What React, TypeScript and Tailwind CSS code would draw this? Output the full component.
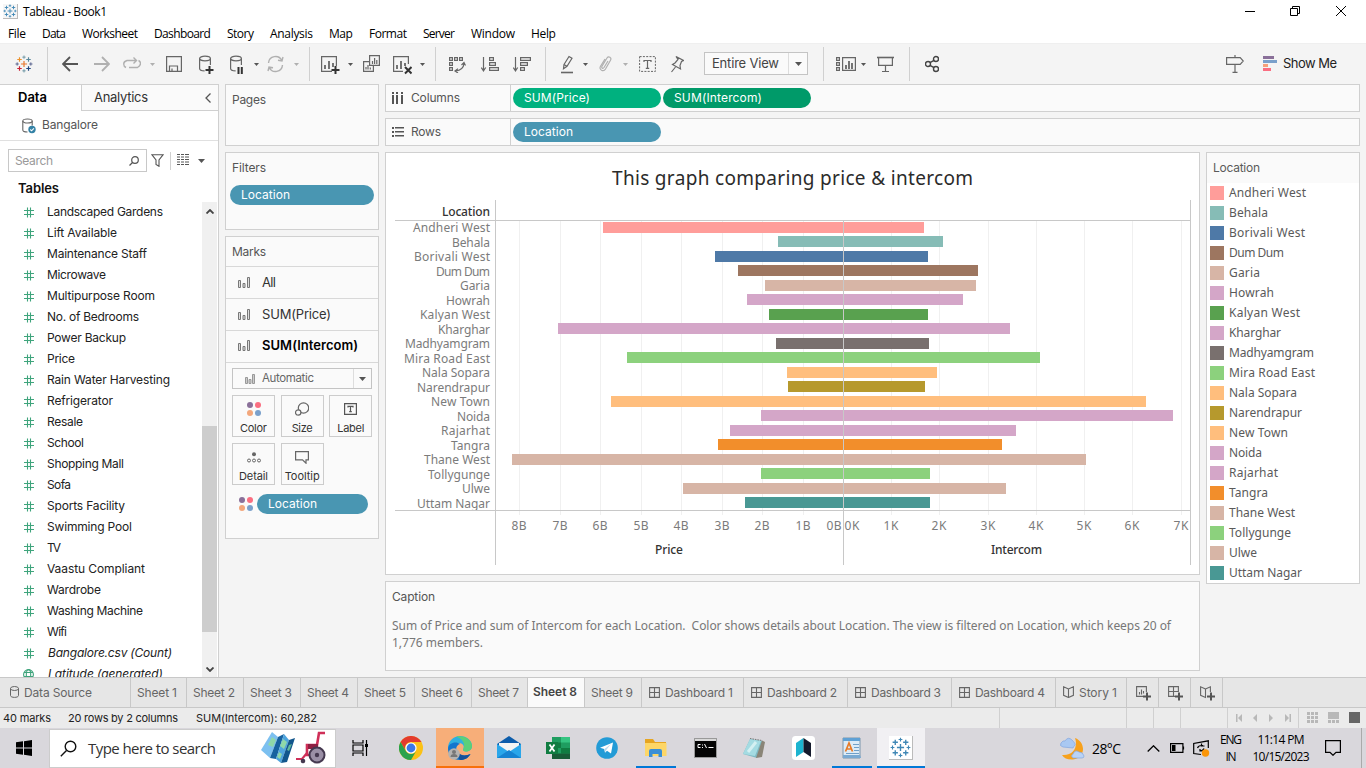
import React, { useLayoutEffect, useRef, useState } from "react";

type Kids = { children?: React.ReactNode };

/* A label that tracks its letters so that it takes up a given width. */
function T({ w, c = "", children }: { w: number; c?: string; children: string }) {
  const ref = useRef<HTMLSpanElement>(null);
  const [ls, setLs] = useState(0);
  useLayoutEffect(() => {
    const el = ref.current;
    if (!el) return;
    setLs((w - el.getBoundingClientRect().width) / Math.max(1, children.length - 1));
  }, [w, children]);
  return (
    <span ref={ref} className={"inline-block shrink-0 whitespace-nowrap " + c} style={{ letterSpacing: ls, marginRight: -ls }}>
      {children}
    </span>
  );
}

function Ic({ w, h = 18, c = "", children }: Kids & { w: number; h?: number; c?: string }) {
  return (
    <svg width={w} height={h} viewBox={`0 0 ${w} ${h}`} fill="none" stroke="#666" strokeWidth="1.2" className={"block shrink-0 " + c}>
      {children}
    </svg>
  );
}

const Sep = ({ c }: { c: string }) => <div className={"-mt-2 h-[34px] w-px shrink-0 bg-[#d0d0d0] " + c} />;
const Caret = ({ c, light }: { c: string; light?: boolean }) => (
  <Ic w={5} c={c}><path d="M0 8h5L2.5 11z" fill={light ? "#b0b0b0" : "#555"} stroke="none" /></Ic>
);
const Plus = ({ x, y }: { x: number; y: number }) => <path d={`M${x - 4} ${y}h8M${x} ${y - 4}v8`} stroke="#333" strokeWidth="2" />;

function TableauMark({ size, mono = false, c = "" }: { size: number; mono?: boolean; c?: string }) {
  const m = "#3f87b5";
  const pts: [number, number, number, string][] = [
    [10, 10, 3.4, "#e8762c"], [10, 2.4, 1.8, "#7199a6"], [10, 17.6, 1.8, "#7099a6"], [2.4, 10, 1.8, "#5b6591"], [17.6, 10, 1.8, "#5b6591"],
    [5, 5, 2.5, "#eb912c"], [15, 5, 2.5, "#59879b"], [5, 15, 2.5, "#c72035"], [15, 15, 2.5, "#1f457e"],
  ];
  return (
    <svg width={size} height={size} viewBox="0 0 20 20" className={"block shrink-0 " + c}>
      {pts.map(([x, y, r, f], i) => (
        <path key={i} d={`M${x - r} ${y}h${2 * r}M${x} ${y - r}v${2 * r}`} stroke={mono ? m : f} strokeWidth={r > 2 ? 1.3 : 1.1} />
      ))}
    </svg>
  );
}

const menus: [string, number, string][] = [
  ["File", 18, "ml-2"], ["Data", 24, "ml-4"], ["Worksheet", 56, "ml-4"], ["Dashboard", 57, "ml-4"], ["Story", 27, "ml-4"],
  ["Analysis", 43, "ml-4"], ["Map", 24, "ml-4"], ["Format", 38, "ml-4"], ["Server", 32, "ml-4"], ["Window", 44, "ml-4"], ["Help", 25, "ml-4"],
];

function TitleBar() {
  return (
    <div className="h-[43px] shrink-0 bg-white font-[family-name:'Open_Sans','Noto_Sans',sans-serif] text-[12px] text-black">
      <div className="flex h-[23px] items-center">
        <div className="ml-[3px] border-r border-b border-[#bbb] bg-[#f6f6f6]"><TableauMark size={14} mono /></div>
        <T w={84} c="ml-[5px]">Tableau - Book1</T>
        <svg width="106" height="14" viewBox="0 0 106 14" className="mr-4 ml-auto mb-[3px]" fill="none" stroke="#000" strokeWidth="1">
          <path d="M1 8.5h10" />
          <path d="M46.500 5.500h7v7h-7zM48.500 5.500v-2h7v7h-2" />
          <path d="M92 3l10 10M102 3l-10 10" />
        </svg>
      </div>
      <div className="flex h-[20px] items-center pt-[2px]">
        {menus.map(([t, w, m]) => <T key={t} w={w} c={m}>{t}</T>)}
      </div>
    </div>
  );
}

function Toolbar() {
  return (
    <div className="flex h-[41px] shrink-0 items-start border-t border-[#efefef] bg-[#f4f4f4] pt-[11px]">
      <TableauMark size={18} c="ml-[15px]" />
      <Sep c="ml-[14px]" />
      <Ic w={16} c="ml-[14px]"><path d="M16 9H1.500M8 2L1 9l7 7" stroke="#555" strokeWidth="1.8" /></Ic>
      <Ic w={16} c="ml-4"><path d="M0 9h14.500M8 2l7 7-7 7" stroke="#b0b0b0" strokeWidth="1.8" /></Ic>
      <Ic w={18} c="ml-[13px]"><path d="M3 12.500Q.7 11.500.7 9T4 5.500h9M10.500 2.500l3 3-3 3M15.500 5.500q2 .8 2 3t-3 4H6" stroke="#b0b0b0" strokeWidth="1.400" /></Ic>
      <Caret c="ml-[9px]" light />
      <Ic w={16} c="ml-[11px]"><path d="M.6 1.600h14.800v14.800H.6zM3.500 16v-5h8v5M6 16v-2.500" /></Ic>
      <Ic w={15} h={20} c="ml-[17px]">
        <ellipse cx="6" cy="3.500" rx="5.400" ry="2.300" /><path d="M.6 3.500v10c0 1.500 2 2.400 5 2.400M11.400 3.500V10" /><Plus x={10.500} y={15} />
      </Ic>
      <Ic w={13} h={20} c="ml-4">
        <ellipse cx="6" cy="3.500" rx="5.400" ry="2.300" /><path d="M.6 3.500v10c0 1.500 2 2.400 5 2.400M11.400 3.500V10" /><path d="M8.500 12v7M11.800 12v7" stroke="#333" strokeWidth="2" />
      </Ic>
      <Caret c="ml-[11px]" />
      <Ic w={17} c="ml-2"><path d="M1.500 8a7 7 0 0 1 13.300-2.500M15.500 10a7 7 0 0 1-13.300 2.500M16 2l-1 4-4-.8M1 16l1-4 4 .8" stroke="#b0b0b0" strokeWidth="1.400" /></Ic>
      <Caret c="ml-[10px]" light />
      <Sep c="ml-[10px]" />
      <Ic w={19} h={20} c="ml-[11px]"><path d="M15.400 11V1.600H.6v14.800H11" /><path d="M4 14v-4M8 14V6M12 12V8" strokeWidth="1.800" /><Plus x={14.500} y={15} /></Ic>
      <Caret c="ml-2" />
      <Ic w={17} c="ml-[10px]">
        <path d="M6.600.6h9.800v9.800H6.600zM6.500 6.600H.6v9.800h9.800v-6" /><path d="M9.500 9V6M11.600 9V3M13.800 9V5M3 14.500V12M5 14.500V10M7.300 14.500v-2" />
      </Ic>
      <Ic w={19} h={20} c="ml-[13px]"><path d="M15.400 9V1.600H.6v14.800H10" /><path d="M4 14v-4M8 14V6M12 11V8" strokeWidth="1.800" /><path d="M12 12l6.500 6.500M18.500 12L12 18.500" stroke="#333" strokeWidth="2" /></Ic>
      <Caret c="ml-2" />
      <Sep c="ml-[10px]" />
      <Ic w={17} c="ml-[13px]">
        <path d="M.6 2.600h2.800v2.800H.6zM5.600 2.600h2.800v2.800H5.600zM10.600 2.600h2.800v2.800h-2.800zM.6 7.600h2.800v2.800H.6zM.6 12.600h2.800v2.800H.6z" /><path d="M15 8.500q-.5 6.500-8.500 7.500M12.500 10L15 7.500l1.500 3M9 13.800L6 16l3 2" />
      </Ic>
      <Ic w={18} c="ml-[15px]"><path d="M2.500 2v13M.3 12.500l2.200 3.300 2.200-3.300M8.600 2.600h3.800v2.800H8.600zM8.600 7.600h5.800v2.800H8.600zM8.600 12.600h8.800v2.800H8.600z" /></Ic>
      <Ic w={18} c="ml-[14px]"><path d="M2.500 2v13M.3 12.500l2.200 3.300 2.200-3.300M7.600 2.600h9.800v2.800H7.600zM7.600 7.600h6.800v2.800H7.600zM7.600 12.600h3.800v2.800H7.600z" /></Ic>
      <Sep c="ml-[14px]" />
      <Ic w={14} h={20} c="ml-[15px]"><path d="M3 9.500L8 1.500l3 1.800-5 8-3.500 2.500zM3 9.500l3.300 2" /><path d="M0 17.500h12" strokeWidth="1.600" /></Ic>
      <Caret c="ml-2" />
      <Ic w={13} c="ml-[11px]"><path d="M9 6l-4 6.500c-1 1.500-3 .5-2-1.200L8 3c1.500-2.300 5-.4 3.500 2.200L6.500 14c-2 3.300-7 .8-5-2.800L6 4" stroke="#b0b0b0" /></Ic>
      <Caret c="ml-[11px]" light />
      <Ic w={17} c="ml-[11px]"><path d="M.6 1.600h15.800v14.800H.6z" strokeDasharray="2 1.300" strokeWidth="1" /><path d="M5 7V5.500h7V7M8.500 5.500v8M6.800 13.300h3.400" /></Ic>
      <Ic w={13} c="ml-[15px]"><path d="M5 1.500l7.500 4-2 1-1.500 4 .5 3.500-8-4.500 2.500-1.500L7 4.500zM4.500 12L.5 17" /></Ic>
      <div className="-mt-[3px] ml-5 flex h-[23px] w-[104px] items-center border border-[#c4c4c4] bg-[#fafafa] font-[family-name:Inter,sans-serif] text-[13px] text-[#444]">
        <T w={67} c="ml-[7px]">Entire View</T>
        <div className="ml-auto flex h-full w-[19px] items-center justify-center border-l border-[#ddd]">
          <svg width="7" height="4"><path d="M0 0h7L3.500 4z" fill="#555" /></svg>
        </div>
      </div>
      <Sep c="ml-[15px]" />
      <Ic w={20} c="ml-3"><path d="M.6 2.600h2.800v2.800H.6zM.6 7.600h2.800v2.800H.6zM.6 12.600h2.800v2.800H.6zM6.600 2.600h12.800v12.800H6.600z" /><path d="M10 14v-4M13 14V6M16 14V8" strokeWidth="1.800" /></Ic>
      <Caret c="ml-[5px]" />
      <Ic w={17} c="ml-[11px]"><path d="M0 2.500h17" strokeWidth="1.600" /><path d="M1.600 3v7.400h13.800V3M8.500 10.500v6M5 16.500h7" /></Ic>
      <Sep c="ml-[15px]" />
      <Ic w={14} c="ml-[15px]"><g stroke="#444" strokeWidth="1.400"><circle cx="3" cy="9" r="2.500" /><circle cx="11" cy="4" r="2.500" /><circle cx="11" cy="14" r="2.500" /><path d="M5 7.700L9 5.300M5 10.300l4 2.400" /></g></Ic>
      <Ic w={18} c="ml-auto"><path d="M.6 2.600h13.600L17.300 6l-3.100 3.400H.6zM9 0v2.500M9 9.500v8M6.500 17.400h5" /></Ic>
      <svg width="14" height="15" className="mt-[1px] ml-[19px] block shrink-0"><path d="M0 0h11v3H0z" fill="#8a7099" /><path d="M0 4h14v3H0z" fill="#7aa0cb" /><path d="M0 8h5v3H0z" fill="#f5a07a" /><path d="M0 12h8v3H0z" fill="#fa6e81" /></svg>
      <div className="mt-[-1px] mr-[29px] ml-[6px] flex w-[54px] font-[family-name:Inter,sans-serif] text-[13px] text-[#222]"><T w={54}>Show Me</T></div>
    </div>
  );
}

const fields: [string, number][] = [
  ["Landscaped Gardens", 116], ["Lift Available", 70], ["Maintenance Staff", 100], ["Microwave", 59], ["Multipurpose Room", 108],
  ["No. of Bedrooms", 92], ["Power Backup", 79], ["Price", 28], ["Rain Water Harvesting", 123], ["Refrigerator", 66], ["Resale", 36],
  ["School", 37], ["Shopping Mall", 77], ["Sofa", 24], ["Sports Facility", 78], ["Swimming Pool", 85], ["TV", 14],
  ["Vaastu Compliant", 98], ["Wardrobe", 54], ["Washing Machine", 96], ["Wifi", 20], ["Bangalore.csv (Count)", 124], ["Latitude (generated)", 115],
];

function DataPane() {
  return (
    <div className="flex w-[219px] shrink-0 flex-col border-t border-r border-[#d0d0d0] bg-white">
      <div className="flex h-[26px] shrink-0">
        <div className="w-[81px] pt-[3px] pl-[18px] text-[13px] font-semibold text-black"><T w={29}>Data</T></div>
        <div className="flex flex-1 items-center border-b border-l border-[#d0d0d0] bg-[#fafafa] text-[13px] text-[#333]">
          <T w={54} c="ml-3">Analytics</T>
          <svg width="6" height="10" className="mr-[7px] ml-auto" fill="none" stroke="#555" strokeWidth="1.300"><path d="M5.500.5L1 5l4.500 4.500" /></svg>
        </div>
      </div>
      <div className="flex h-[30px] shrink-0 items-center border-b border-[#e0e0e0] text-[12px] text-[#555]">
        <svg width="14" height="16" viewBox="0 0 14 16" className="ml-[22px]" fill="none" stroke="#666" strokeWidth="1.100"><ellipse cx="5.500" cy="3" rx="4.700" ry="2" /><path d="M.8 3v9c0 1.200 2 2 4.700 2M10.200 3v4.500" /><circle cx="10" cy="11.500" r="3.700" fill="#3482a6" stroke="none" /><path d="M8.300 11.500l1.300 1.300 2.300-2.500" stroke="#fff" /></svg>
        <T w={56} c="mb-px ml-[6px]">Bangalore</T>
      </div>
      <div className="flex h-[38px] shrink-0 items-center pt-[1px] pl-2">
        <div className="flex h-[23px] w-[139px] items-center border border-[#c8c8c8] pt-px text-[12px] text-[#999]">
          <T w={38} c="ml-[6px]">Search</T>
          <svg width="10" height="10" className="mr-[7px] ml-auto" fill="none" stroke="#555" strokeWidth="1.200"><circle cx="6" cy="4" r="3.300" /><path d="M3.500 6.500L.5 9.500" /></svg>
        </div>
        <svg width="13" height="13" className="ml-1" fill="none" stroke="#555" strokeWidth="1.100"><path d="M.8.700h11.400L8 6v6.300L5 10.500V6z" /></svg>
        <div className="ml-[6px] h-[18px] w-px bg-[#d0d0d0]" />
        <svg width="12" height="11" className="mb-[2px] ml-[6px]" stroke="#555"><path d="M0 .5h3M4 .5h3M8 .5h4M0 3h3M4 3h3M8 3h4M0 5.500h3M4 5.500h3M8 5.500h4M0 8h3M4 8h3M8 8h4M0 10.500h3M4 10.500h3M8 10.500h4" /></svg>
        <svg width="7" height="4" className="ml-[9px]"><path d="M0 0h7L3.500 4z" fill="#555" /></svg>
      </div>
      <div className="h-[23px] shrink-0 pl-[18px] text-[13px] leading-[18px] font-semibold text-[#111]"><T w={41}>Tables</T></div>
      <div className="flex min-h-0 flex-1">
        <div className="min-w-0 flex-1 overflow-hidden">
          {fields.map(([t, w], i) => (
            <div key={t} className="flex h-[21px] items-center pb-px text-[12px] text-[#222]">
              {i < 22 ? (
                <svg width="11" height="11" className="mt-px ml-[24px]" fill="none" stroke="#3fa47c" strokeWidth="1.100"><path d="M0 3.500h10M0 7.500h10M3.500.5v10M6.500.5v10" /></svg>
              ) : (
                <svg width="11" height="11" className="ml-[23px] mr-[1px]" fill="none" stroke="#3fa47c" strokeWidth="1.100"><circle cx="5.500" cy="5.500" r="4.900" /><ellipse cx="5.500" cy="5.500" rx="2.200" ry="4.900" /><path d="M1 3.500h9M1 7.500h9" /></svg>
              )}
              <T w={w} c={i > 20 ? "ml-[13px] italic" : "ml-[12px]"}>{t}</T>
            </div>
          ))}
        </div>
        <div className="mr-px flex w-[15px] flex-col items-center bg-[#f0f0f0]">
          <svg width="8" height="5" className="mt-[7px]" fill="none" stroke="#444" strokeWidth="1.800"><path d="M.5 4.500L4 1l3.500 3.500" /></svg>
          <div className="mt-[212px] h-[206px] w-full bg-[#cdcdcd]" />
          <svg width="8" height="5" className="mt-auto mb-[5px]" fill="none" stroke="#444" strokeWidth="1.800"><path d="M.5.5L4 4 7.500.5" /></svg>
        </div>
      </div>
    </div>
  );
}

const Bars = ({ c = "" }: { c?: string }) => (
  <svg width="12" height="12" className={"shrink-0 " + c} fill="#ddd" stroke="#777" strokeWidth="1"><path d="M.5 3.500h2v7h-2zM5 6.500h2v4H5zM9.500.5h2v10h-2z" /></svg>
);
const Dots = ({ c = "" }: { c?: string }) => (
  <svg width="14" height="14" className={"shrink-0 " + c}><circle cx="3" cy="3" r="3" fill="#8a7099" /><circle cx="11" cy="3" r="3" fill="#fa6e81" /><circle cx="3" cy="11" r="3" fill="#f3a77c" /><circle cx="11" cy="11" r="3" fill="#7aa0cb" /></svg>
);

function MarkButton({ label, w, children }: Kids & { label: string; w: number }) {
  return (
    <div className="flex h-[42px] w-[43px] flex-col items-center justify-between border border-[#ccc] bg-[#fafafa] pt-[6px] text-[11px] leading-[15px] text-[#333]">
      <div className="flex h-[14px] items-center">{children}</div>
      <T w={w}>{label}</T>
    </div>
  );
}

function Cards() {
  const box = "shrink-0 border border-[#d0d0d0] bg-[#fafafa] text-[#555] text-[12px]";
  return (
    <div className="ml-[6px] flex w-[154px] shrink-0 flex-col gap-[6px]">
      <div className={box + " h-[62px] pt-[6px] pl-[6px]"}><T w={34}>Pages</T></div>
      <div className={box + " h-[78px] pt-[6px] pl-[6px]"}>
        <div className="flex h-[18px]"><T w={34}>Filters</T></div>
        <div className="mt-[8px] -ml-[2px] flex h-5 w-[144px] items-center rounded-full bg-[#4996b2] pl-[11px] text-white"><T w={49}>Location</T></div>
      </div>
      <div className={box + " h-[303px]"}>
        <div className="h-[29px] pt-[6px] pl-[6px]"><T w={34}>Marks</T></div>
        {([["All", 14], ["SUM(Price)", 69], ["SUM(Intercom)", 96]] as [string, number][]).map(([t, w], i) => (
          <div key={t} className={"flex h-8 items-center border-t border-[#d8d8d8] text-[13px] " + (i === 2 ? "pb-[2px] font-semibold text-black" : "text-[#333]")}>
            <Bars c="ml-3" /><T w={w} c="ml-3">{t}</T>
          </div>
        ))}
        <div className="border-t border-[#d8d8d8] pl-[6px]">
          <div className="mt-[5px] flex h-[21px] w-[140px] items-center border border-[#c4c4c4]">
            <svg width="10" height="10" className="ml-[12px]" fill="#ccc" stroke="#999" strokeWidth="1"><path d="M.5 3.500h2v6h-2zM4 5.500h2v4H4zM7.500.5h2v9h-2z" /></svg>
            <T w={52} c="mt-px ml-[7px] text-[#666] text-[11.500px]">Automatic</T>
            <div className="ml-auto flex h-full w-[18px] items-center justify-center border-l border-[#ddd]"><svg width="7" height="4"><path d="M0 0h7L3.500 4z" fill="#555" /></svg></div>
          </div>
          <div className="mt-[6px] grid w-[140px] grid-cols-3 gap-x-[6px] gap-y-[6px]">
            <MarkButton label="Color" w={27}><Dots /></MarkButton>
            <MarkButton label="Size" w={21}><svg width="14" height="14" fill="none" stroke="#666" strokeWidth="1.200"><circle cx="8.500" cy="6" r="5.200" /><circle cx="3.200" cy="10.500" r="2.700" fill="#fafafa" /></svg></MarkButton>
            <MarkButton label="Label" w={27}><svg width="13" height="12" fill="none" stroke="#555" strokeWidth="1.200"><path d="M.6.600h11.800v10.800H.6zM4 4.500V3.300h5v1.200M6.500 3.300v5.400M5.200 8.700h2.600" /></svg></MarkButton>
            <MarkButton label="Detail" w={29}><svg width="14" height="11" fill="none" stroke="#666"><circle cx="7" cy="2.200" r="2" fill="#666" stroke="none" /><circle cx="2" cy="8.500" r="1.500" /><circle cx="7" cy="8.500" r="1.500" /><circle cx="12" cy="8.500" r="1.500" /></svg></MarkButton>
            <MarkButton label="Tooltip" w={35}><svg width="14" height="13" fill="none" stroke="#666" strokeWidth="1.200"><path d="M.6.600h12.800v8.300H11v3.300L7.500 8.900H.6z" /></svg></MarkButton>
          </div>
          <div className="mt-[9px] flex items-center">
            <Dots c="ml-[7px]" />
            <div className="ml-1 flex h-5 w-[111px] items-center rounded-full bg-[#4996b2] pl-[11px] text-white"><T w={49}>Location</T></div>
          </div>
        </div>
      </div>
    </div>
  );
}

function Shelf({ label, w, icon, children }: Kids & { label: string; w: number; icon: React.ReactNode }) {
  return (
    <div className="flex h-[28px] shrink-0 items-center border border-[#d0d0d0] bg-[#fafafa] text-[12px] text-[#555]">
      <div className="flex h-full w-[125px] items-center border-r border-[#d0d0d0] pl-[6px]">{icon}<T w={w} c="ml-[7px]">{label}</T></div>
      <div className="flex gap-[2px] pl-[2px] text-white">{children}</div>
    </div>
  );
}

/* name, label width, colour, left end (Price), right end (Intercom), legend width */
const rows: [string, number, string, number, number, number][] = [
  ["Andheri West", 77, "#ff9d9a", 603, 924, 77], ["Behala", 38, "#86bcb6", 778, 943, 39], ["Borivali West", 76, "#4e79a7", 715, 928, 76],
  ["Dum Dum", 54, "#9d7660", 738, 978, 55], ["Garia", 30, "#d7b5a6", 765, 976, 31], ["Howrah", 44, "#d4a6c8", 747, 963, 45],
  ["Kalyan West", 70, "#59a14f", 769, 928, 71], ["Kharghar", 52, "#d4a6c8", 558, 1010, 52], ["Madhyamgram", 85, "#79706e", 776, 929, 85],
  ["Mira Road East", 86, "#8cd17d", 627, 1040, 86], ["Nala Sopara", 68, "#ffbe7d", 787, 937, 68], ["Narendrapur", 73, "#b6992d", 788, 925, 73],
  ["New Town", 59, "#ffbe7d", 611, 1146, 59], ["Noida", 33, "#d4a6c8", 761, 1173, 33], ["Rajarhat", 49, "#d4a6c8", 730, 1016, 49],
  ["Tangra", 39, "#f28e2b", 718, 1002, 39], ["Thane West", 66, "#d7b5a6", 512, 1086, 66], ["Tollygunge", 62, "#8cd17d", 761, 930, 62],
  ["Ulwe", 28, "#d7b5a6", 683, 1006, 28], ["Uttam Nagar", 73, "#499894", 745, 930, 73],
];
const ticks: [string, number, number][] = [
  ["8B", 519, 519], ["7B", 560, 560], ["6B", 600, 600], ["5B", 641, 641], ["4B", 681, 681], ["3B", 722, 722], ["2B", 762, 762], ["1B", 803, 803], ["0B", 0, 834],
  ["0K", 0, 852], ["1K", 891, 891], ["2K", 939, 939], ["3K", 988, 988], ["4K", 1036, 1036], ["5K", 1084, 1084], ["6K", 1132, 1132], ["7K", 1181, 1181],
];

function Chart() {
  return (
    <svg width="796" height="366" viewBox="395 200 796 366" className="mt-[5px] ml-[9px] block font-[family-name:'Noto_Sans',sans-serif] text-[12px]" shapeRendering="crispEdges">
      {ticks.map(([t, x, c]) => (
        <g key={t}>
          {x > 0 && <rect x={x} y="221" width="1" height="294" fill="#f0f0f0" />}
          <text x={c - 7.500} y="530" textLength="15" fill="#7b7b7b">{t}</text>
        </g>
      ))}
      {rows.map(([n, w, f, a, b], i) => (
        <g key={n}>
          <text x={490 - w} y={232 + Math.round(14.500 * i)} textLength={w} fill="#7b7b7b">{n}</text>
          <rect x={a} y={222 + Math.floor(14.500 * i)} width={b - a} height="11" fill={f} />
        </g>
      ))}
      <text x="442" y="216" textLength="48" fill="#333" fontWeight="500">Location</text>
      <text x="655" y="554" textLength="28" fill="#333" fontWeight="500">Price</text>
      <text x="991" y="554" textLength="51" fill="#333" fontWeight="500">Intercom</text>
      <path d="M395 220.500h795M395 510.500h795M495.500 200v365M843.500 220v345M1190.500 200v365" stroke="#c8c8c8" />
    </svg>
  );
}

function Workspace() {
  return (
    <div className="ml-[6px] flex w-[975px] shrink-0 flex-col gap-[6px]">
      <Shelf label="Columns" w={49} icon={<svg width="12" height="12" fill="#555" className="mb-px"><path d="M0 0h2v2H0zM0 3h2v9H0zM4 0h2v2H4zM4 3h2v9H4zM9 0h2v2H9zM9 3h2v9H9z" /></svg>}>
        <div className="flex h-5 w-[148px] items-center rounded-full bg-[#00b17f] pl-[11px]"><T w={66}>SUM(Price)</T></div>
        <div className="flex h-5 w-[148px] items-center rounded-full bg-[#009a69] pl-[11px]"><T w={88}>SUM(Intercom)</T></div>
      </Shelf>
      <Shelf label="Rows" w={30} icon={<svg width="12" height="12" fill="#555"><path d="M0 1h2v2H0zM3 1h9v1.500H3zM0 5h2v2H0zM3 5h9v1.500H3zM0 9h2v2H0zM3 9h9v1.500H3z" /></svg>}>
        <div className="flex h-5 w-[148px] items-center rounded-full bg-[#4996b2] pl-[11px]"><T w={49}>Location</T></div>
      </Shelf>
      <div className="flex items-start gap-[6px]">
        <div className="flex w-[815px] flex-col gap-[6px]">
          <div className="h-[423px] border border-[#d0d0d0] bg-white">
            <div className="h-[42px] pt-[11px] pl-[226px] font-[family-name:'Noto_Sans',sans-serif] text-[19px] leading-[28px] text-[#2b2b2b]"><T w={361}>This graph comparing price &amp; intercom</T></div>
            <Chart />
          </div>
          <div className="h-[90px] border border-[#d0d0d0] bg-[#fafafa] pt-[6px] pl-[6px] font-[family-name:'Noto_Sans',sans-serif] text-[12px] leading-[17px] text-[#777]">
            <div className="mb-[12px] font-[family-name:Inter,sans-serif] text-[12px] text-[#555]"><T w={43}>Caption</T></div>
            <div><T w={779}>{"Sum of Price and sum of Intercom for each Location.\u00a0 Color shows details about Location. The view is filtered on Location, which keeps 20 of"}</T></div>
            <div><T w={91}>1,776 members.</T></div>
          </div>
        </div>
        <div className="h-[432px] w-[154px] border border-[#d0d0d0] bg-white font-[family-name:'Noto_Sans',sans-serif] text-[12px] text-[#5a5a5a]">
          <div className="h-[30px] bg-[#fafafa] pt-[6px] pl-[6px] font-[family-name:Inter,sans-serif] text-[12px]"><T w={47}>Location</T></div>
          {rows.map(([n, , f, , , w]) => (
            <div key={n} className="flex h-5 items-center pl-[3px]">
              <svg width="14" height="14" className="shrink-0"><rect width="14" height="14" fill={f} /></svg>
              <T w={w} c="ml-[5px]">{n}</T>
            </div>
          ))}
        </div>
      </div>
    </div>
  );
}

const Grid = () => <svg width="11" height="11" className="mb-[2px] shrink-0" fill="none" stroke="#666" strokeWidth="1.100"><path d="M.6.600h9.800v9.800H.6zM5.500.6v9.800M.6 5.500h9.800" /></svg>;
const Book = () => <svg width="11" height="12" className="mb-[2px] shrink-0" fill="none" stroke="#666" strokeWidth="1.100"><path d="M5.500 3L.6.800v8.500l4.900 2.200 4.900-2.200V.8zv8.500" /></svg>;

const tabs: [string, string, number, string][] = [
  ["Sheet 1", "w-[56px]", 40, ""], ["Sheet 2", "w-[57px]", 42, ""], ["Sheet 3", "w-[57px]", 42, ""], ["Sheet 4", "w-[57px]", 42, ""], ["Sheet 5", "w-[57px]", 42, ""],
  ["Sheet 6", "w-[57px]", 42, ""], ["Sheet 7", "w-[56px]", 41, ""], ["Sheet 8", "w-[57px]", 44, ""], ["Sheet 9", "w-[57px]", 42, ""],
  ["Dashboard 1", "w-[102px]", 68, "g"], ["Dashboard 2", "w-[104px]", 70, "g"], ["Dashboard 3", "w-[104px]", 70, "g"], ["Dashboard 4", "w-[104px]", 70, "g"], ["Story 1", "w-[71px]", 38, "b"],
];

function SheetTabs() {
  return (
    <div className="flex h-[31px] shrink-0 border-t border-b border-[#c8c8c8] bg-[#e6e6e6] text-[12px] text-[#666]">
      <div className="flex w-[131px] items-center border-r border-[#c8c8c8] pt-px pl-[10px]">
        <svg width="9" height="12" className="mb-[3px]" fill="none" stroke="#666"><ellipse cx="4.500" cy="2.500" rx="4" ry="2" /><path d="M.5 2.500v7c0 2.500 8 2.500 8 0v-7" /></svg>
        <T w={68} c="ml-[5px]">Data Source</T>
      </div>
      {tabs.map(([t, cw, w, k]) => (
        <div key={t} className={"flex shrink-0 items-center border-r border-[#c8c8c8] " + cw + (t === "Sheet 8" ? " bg-[#fafafa] pb-px pl-[5px] font-semibold text-[#444]" : k ? " gap-[5px] pt-px pl-[7px]" : " pt-px pl-[6px]")}>
          {k === "g" && <Grid />}{k === "b" && <Book />}<T w={w}>{t}</T>
        </div>
      ))}
      {[0, 1, 2].map((i) => (
        <div key={i} className="flex w-8 items-center border-r border-[#c8c8c8] pl-[9px]">
          <svg width="16" height="16" fill="none" stroke="#666" strokeWidth="1.100">
            {i === 0 && <path d="M10.400 7V1.600H.6v9.800H7M3.500 9.500V7M5.500 9.500v-5M7.500 8.500V6" />}
            {i === 1 && <path d="M10.400 7V1.600H.6v9.800H7M5.500 1.600v9.800M.6 6.500h9.800" />}
            {i === 2 && <path d="M5.500 4L.6 1.800v8.500l4.900 2.200zM5.500 4l4.900-2.200V7" />}
            <path d="M7 11.500h8M11 7.500v8" strokeWidth="2" stroke="#555" />
          </svg>
        </div>
      ))}
    </div>
  );
}

function StatusBar() {
  return (
    <div className="flex h-[20px] shrink-0 items-center bg-[#ebebeb] text-[11px] text-[#222]">
      <div className="flex pt-px"><T w={48} c="ml-[3px]">40 marks</T><T w={110} c="ml-[17px]">20 rows by 2 columns</T><T w={121} c="ml-[18px]">SUM(Intercom): 60,282</T></div>
      <div className="ml-auto h-full w-[127px] border-l border-[#d0d0d0]" />
      <div className="h-full w-[27px] border-l border-[#d0d0d0]" />
      <div className="h-full w-[27px] border-l border-[#d0d0d0]" />
      <div className="h-full w-[47px] border-l border-[#d0d0d0]" />
      <div className="flex h-full w-[71px] items-center border-l border-[#d0d0d0] pb-px pl-2">
        <svg width="56" height="8" fill="#b8b8b8"><path d="M0 0h1.500v8H0zM6 0v8L2 4zM21 0v8l-4-4zM33 0v8l4-4zM49 0v8l4-4zM53.500 0H55v8h-1.500z" /></svg>
      </div>
      <div className="flex h-full w-[68px] items-center border-l border-[#d0d0d0] pb-px pl-2">
        <svg width="54" height="11" fill="#b8b8b8"><path d="M0 0h3v3H0zM4 0h3v3H4zM8 0h3v3H8zM0 4h3v3H0zM4 4h3v3H4zM8 4h3v3H8zM0 8h3v3H0zM4 8h3v3H4zM8 8h3v3H8zM21 0h11v7H21zM21 8h3v3h-3zM25 8h3v3h-3zM29 8h3v3h-3z" /><path d="M42 0h11v11H42z" fill="#666" /></svg>
      </div>
    </div>
  );
}

function Task({ c = "", line = "", children }: Kids & { c?: string; line?: string }) {
  return (
    <div className={"relative flex h-full w-12 shrink-0 items-center justify-center " + c}>
      {children}
      {line && <div className={"absolute bottom-0 h-[2px] " + line} />}
    </div>
  );
}

function Taskbar() {
  return (
    <div className="flex h-[40px] shrink-0 items-center bg-[#d9d7dc] font-[family-name:'Open_Sans','Noto_Sans',sans-serif] text-[12px] text-black">
      <svg width="16" height="16" className="ml-4"><path d="M0 2.300L7 1.300V7.500H0zM8 1.200L16 0v7.500H8zM0 8.500h7v6.200l-7-1zM8 8.500h8V16l-8-1.200z" /></svg>
      <div className="ml-[17px] flex h-[39px] w-[287px] items-center border border-[#ccc] bg-white text-[15px] text-[#333]">
        <svg width="17" height="17" className="ml-[10px]" fill="none" stroke="#111" strokeWidth="1.400"><circle cx="10.500" cy="6.500" r="5.300" /><path d="M6.500 10.500L.8 16.200" /></svg>
        <T w={128} c="ml-[11px]">Type here to search</T>
        <svg width="68" height="34" viewBox="0 0 68 34" className="ml-[44px]">
          <path d="M12 1l6 5-8 21-9-8z" fill="#7cc0f0" /><path d="M18 6l6-3-8 25-6-1z" fill="#17629f" /><path d="M24 3l5 6-8 23-5-4z" fill="#4fa4dd" /><path d="M29 9l6-2-8 24-6 1z" fill="#12568c" />
          <path d="M12 6l4 3-3 7-5-2zM23 8l4 3-3 7-4-3zM19 21l3 2-2 5-3-2z" fill="#8fd8a8" /><path d="M29 14l3-1-3 7-2-1z" fill="#63b79a" />
          <path d="M65 2h-6l-2 12H47v10h10" fill="none" stroke="#cf2f58" strokeWidth="2.600" /><path d="M48 13h10v5H48z" fill="#8e1f42" /><path d="M47 22l-5 6H36" fill="none" stroke="#cf2f58" strokeWidth="2.200" />
          <circle cx="57" cy="24" r="7.500" fill="#9a8fa6" stroke="#44384f" strokeWidth="2" /><circle cx="57" cy="24" r="2.200" fill="#44384f" /><circle cx="43" cy="30" r="2.300" fill="#44384f" />
        </svg>
      </div>
      <svg width="17" height="16" className="ml-[16px]" fill="none" stroke="#000" strokeWidth="1.200"><path d="M1 0v3h10V0M1 5h10v6H1zM1 16v-3h10v3M14.500 0v16" /><path d="M13 4h3v3h-3z" fill="#000" stroke="none" /></svg>
      <div className="ml-[18px] flex h-full gap-px">
        <Task><svg width="24" height="24"><circle cx="12" cy="12" r="12" fill="#fbc116" /><path d="M1.600 6A12 12 0 0 1 22.400 6H12a6 6 0 0 0-5.200 9z" fill="#e33b2e" /><path d="M1.600 6A12 12 0 0 0 12 24l5.200-9A6 6 0 0 1 6.800 15z" fill="#2ba24c" /><circle cx="12" cy="12" r="5.600" fill="#fff" /><circle cx="12" cy="12" r="4.400" fill="#3b78e7" /></svg></Task>
        <Task c="bg-[#f7ae79]" line="w-12 bg-[#f7700c]">
          <svg width="24" height="24">
            <path d="M0 12C0 5 5.500 0 12 0s12 4.500 12 10c0 4-3.500 5.500-6 5.500s-3.500-1.200-2.500-3C17 8 12 6 8 8S0 12 0 12" fill="#2fb0e0" />
            <path d="M8 .6C17-1.500 24 4 24 10c0 4-3.500 5.500-6 5.500s-3.500-1.200-2.500-3C18 6 12 2 8 .6" fill="#5bd079" />
            <path d="M0 13C0 6 9 5 12 8c-4 1-5 6-2 9 4 3.500 9 2.500 12.500 1C20 22.500 16 24 12 24 5 24 0 19 0 13" fill="#1276cf" />
            <path d="M10 17c4 3.500 9 2.500 12.500 1C20 22.500 16 24 12 24q-3-3-2-7" fill="#12519a" />
            <circle cx="6" cy="18" r="5.800" fill="#b5b3b1" /><circle cx="6" cy="16" r="2" fill="#777" /><path d="M2.500 21q0-3 3.500-3t3.500 3z" fill="#777" />
          </svg>
        </Task>
        <Task><svg width="24" height="24"><path d="M0 8L12 0l12 8v5H0z" fill="#0d5cab" /><path d="M2 7h20v10H2z" fill="#f4f4f4" /><path d="M0 8l12 8 12-8v14H0z" fill="#2aa6ea" /><path d="M0 22l12-8 12 8z" fill="#1683d2" /></svg></Task>
        <Task><svg width="24" height="22"><path d="M6 0h18v22H6z" fill="#1f9d60" /><path d="M15 0h9v5.500h-9z" fill="#35c481" /><path d="M6 5.500h9V11H6zM15 11h9v5.500h-9z" fill="#107c41" /><path d="M6 16.500h18V22H6z" fill="#185c37" /><path d="M0 5h12v12H0z" fill="#107c41" /><path d="M3.500 7.500l5 7M8.500 7.500l-5 7" stroke="#fff" strokeWidth="1.800" /></svg></Task>
        <Task><svg width="22" height="22"><circle cx="11" cy="11" r="10.800" fill="#239bd6" /><path d="M4 10.800L17 5.500 15 16.500l-4-2.700-2 2-.8-3.800z" fill="#fff" /><path d="M8.500 12L15 7l-5 6.300-.8 2z" fill="#b8d8ec" /></svg></Task>
        <Task line="w-10 bg-[#0078d7]"><svg width="22" height="20"><path d="M0 1h8l2 3h11v14H0z" fill="#e6a522" /><path d="M0 5h21.500v13H0z" fill="#fdd667" /><path d="M4 19v-6q0-2 2-2h9q2 0 2 2v6h-3.500v-3h-6v3z" fill="#3a8fd6" /></svg></Task>
        <Task><svg width="23" height="20"><path d="M.5.500h22v19H.5z" fill="#050505" stroke="#999" /><path d="M1 1h21v2H1z" fill="#d8d8d8" /><path d="M6.500 6.500H4v3h2.500M8.500 6.500v1M8.500 9v1M10.500 6l2 4M14.500 9.500h5" stroke="#fff" fill="none" /></svg></Task>
        <Task><svg width="24" height="24"><path d="M8 3l13 2-6 17L1 18z" fill="#7fb9c3" /><path d="M8 3l11 2-6 15L1 18z" fill="#a4dbe2" /><path d="M20 4.500L23 6l-3 15-6 1z" fill="#8a8578" /><path d="M6 16l8-10" stroke="#d4f0f2" strokeWidth="3" /><path d="M8 2.500l12 2" stroke="#777" strokeDasharray="1.500 1" /></svg></Task>
        <Task><svg width="23" height="24"><rect width="23" height="24" rx="3.500" fill="#fff" /><path d="M4 7l7.500-5v14L4 21z" fill="#1cb3cf" /><path d="M11.500 2L19 7v14l-7.500-5z" fill="#14192b" /></svg></Task>
        <Task line="w-10 bg-[#0078d7]"><svg width="20" height="22"><path d="M1 1h17v20H1z" fill="#dcebf7" stroke="#7b96ac" /><path d="M1 1h17v3H1z" fill="#5fa1d5" /><path d="M1 18h17l1 3H1z" fill="#79a9d2" /><path d="M3.500 14.500L7 6l3.500 8.500M4.500 12h5" stroke="#e77b28" strokeWidth="1.700" fill="none" /><path d="M11 7.500h6M12 10.500h5M12 13.500h5M4 16.500h13" stroke="#6f9fc8" /></svg></Task>
        <Task c="bg-[#f1f0f3]" line="w-12 bg-[#0078d7]"><div className="border-r border-b border-[#bbb] bg-white p-px"><TableauMark size={21} mono /></div></Task>
      </div>
      <svg width="25" height="23" className="ml-auto"><path d="M15 1c11 4 11 20-2 21.500Q5 23 2 18c12 1 16-9 13-17" fill="#f7a11c" /><path d="M3 10Q-1 9 1 6t4-2q3-5 7-1t3 5-2 3z" fill="#a9c8f2" stroke="#82a6df" strokeWidth=".7" /><path d="M13 21q-3-2 0-4 2-5 6-2 4 0 5 4 0 2-2 2z" fill="#b9d3f6" stroke="#82a6df" strokeWidth=".7" /></svg>
      <div className="ml-[7px] flex w-[29px] text-[14px]"><T w={29}>28°C</T></div>
      <svg width="13" height="7" className="ml-[26px]" fill="none" stroke="#000" strokeWidth="1.300"><path d="M.7 6.500L6.500.8l5.800 5.700" /></svg>
      <svg width="15" height="10" className="ml-[10px]" fill="none" stroke="#000" strokeWidth="1.200"><path d="M.6.600h12.300v8.800H.6zM13.500 3.500v3" /><path d="M2 2h3.500v6H2z" fill="#000" stroke="none" /></svg>
      <svg width="17" height="17" className="ml-[8px]" fill="none" stroke="#000" strokeWidth="1.200"><path d="M8 14.500L.7 13.500v-10L15.300.8V8M4.500 8q1-2.500 4-2.500h1.500M8.500 3.500v2.500h3M11 8.500q-1 2.500-4 2.500M7 9v2.500" /><circle cx="12.500" cy="13" r="3.700" fill="#fb9608" stroke="none" /></svg>
      <div className="ml-[10px] flex w-[22px] flex-col items-center leading-[17px]"><T w={22}>ENG</T><T w={11}>IN</T></div>
      <div className="ml-[10px] flex w-[58px] flex-col items-center leading-[17px]"><T w={47}>11:14 PM</T><T w={57}>10/15/2023</T></div>
      <svg width="16" height="16" className="mr-[20px] ml-[15px]" fill="none" stroke="#000" strokeWidth="1.200"><path d="M.6.600h14.800v11.800H11L8 15.300l-3-2.900H.6z" /></svg>
      <div className="mr-1 h-full w-px bg-[#aaa]" />
    </div>
  );
}

export default function App() {
  return (
    <div className="flex h-[768px] w-[1366px] flex-col overflow-hidden bg-[#f4f4f4] font-[family-name:Inter,'Liberation_Sans',sans-serif]">
      <TitleBar />
      <Toolbar />
      <div className="flex h-[593px] shrink-0">
        <DataPane />
        <Cards />
        <Workspace />
      </div>
      <SheetTabs />
      <StatusBar />
      <Taskbar />
    </div>
  );
}
